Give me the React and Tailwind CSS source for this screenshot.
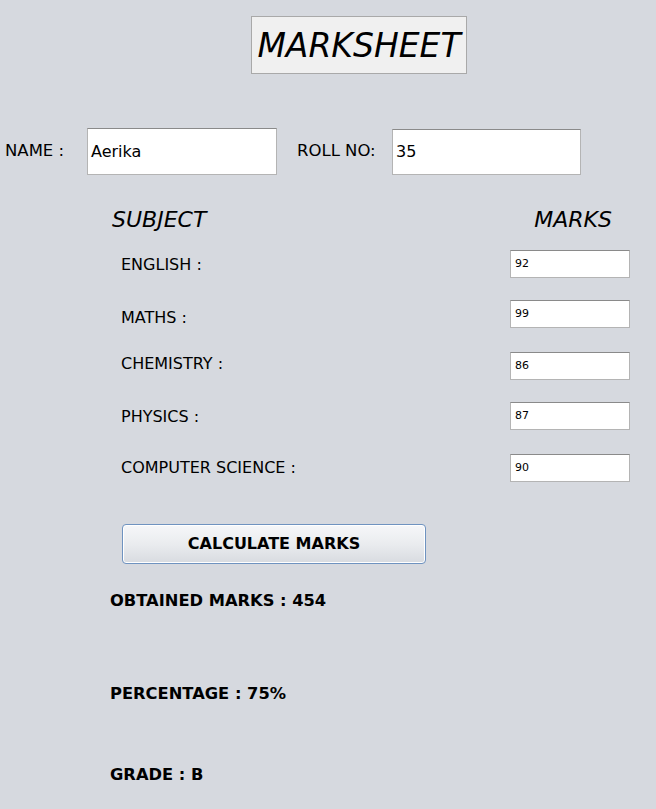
export default function App() {
  const subjects = [
    { name: "ENGLISH :", mark: "92", mt: "mt-[17px]", lo: "translate-y-[1px]" },
    { name: "MATHS :", mark: "99", mt: "mt-[22px]", lo: "translate-y-[4px]" },
    { name: "CHEMISTRY :", mark: "86", mt: "mt-[24px]", lo: "-translate-y-[2px]" },
    { name: "PHYSICS :", mark: "87", mt: "mt-[22px]", lo: "translate-y-[1px]" },
    { name: "COMPUTER SCIENCE :", mark: "90", mt: "mt-[24px]", lo: "translate-y-0" },
  ];
  return (
    <div className="w-[656px] h-[809px] bg-[#d6d9df] text-black overflow-hidden" style={{ fontFamily: "Tahoma, 'DejaVu Sans', sans-serif" }}>
      <div className="pt-[16px] pl-[251px]">
        <div className="w-[216px] h-[58px] bg-[#f0f0f0] border border-[#a9a9a9] flex items-center justify-center">
          <span className="italic text-[33px] leading-none">MARKSHEET</span>
        </div>
      </div>

      <div className="mt-[54px] flex items-center h-[47px]">
        <span className="ml-[5px] w-[82px] text-[16.5px]">NAME :</span>
        <div className="w-[190px] h-[47px] bg-white border border-[#b4b4b4] border-t-[#8a8a8a] flex items-center pl-[3px] text-[16px]">Aerika</div>
        <span className="ml-[20px] w-[95px] text-[16.5px]">ROLL NO:</span>
        <div className="w-[189px] h-[46px] bg-white border border-[#b4b4b4] border-t-[#8a8a8a] flex items-center pl-[3px] text-[16px]">35</div>
      </div>

      <div className="mt-[32px] flex items-center h-[26px]">
        <span className="ml-[112px] italic text-[22px] leading-none">SUBJECT</span>
        <span className="ml-auto mr-[44px] italic text-[22px] leading-none">MARKS</span>
      </div>

      {subjects.map((s) => (
        <div key={s.name} className={`${s.mt} flex items-center h-[28px]`}>
          <span className={`ml-[121px] text-[16px] ${s.lo}`}>{s.name}</span>
          <div className="ml-auto mr-[26px] w-[120px] h-[28px] bg-white border border-[#b4b4b4] border-t-[#8a8a8a] flex items-center pl-[4px] text-[11px]">{s.mark}</div>
        </div>
      ))}

      <div className="mt-[42px] pl-[122px]">
        <div className="w-[304px] h-[40px] rounded-[4px] border border-[#6f93c0] shadow-[inset_0_0_0_1px_#ffffff] bg-gradient-to-b from-[#f6f7f9] via-[#eaecef] to-[#d8dbe0] flex items-center justify-center font-bold text-[16px]">CALCULATE MARKS</div>
      </div>

      <div className="pl-[110px] font-bold text-[16.3px]">
        <div className="mt-[26px] h-[22px] flex items-center">OBTAINED MARKS : 454</div>
        <div className="mt-[71px] h-[22px] flex items-center">PERCENTAGE : 75%</div>
        <div className="mt-[59px] h-[22px] flex items-center">GRADE : B</div>
      </div>
    </div>
  );
}
